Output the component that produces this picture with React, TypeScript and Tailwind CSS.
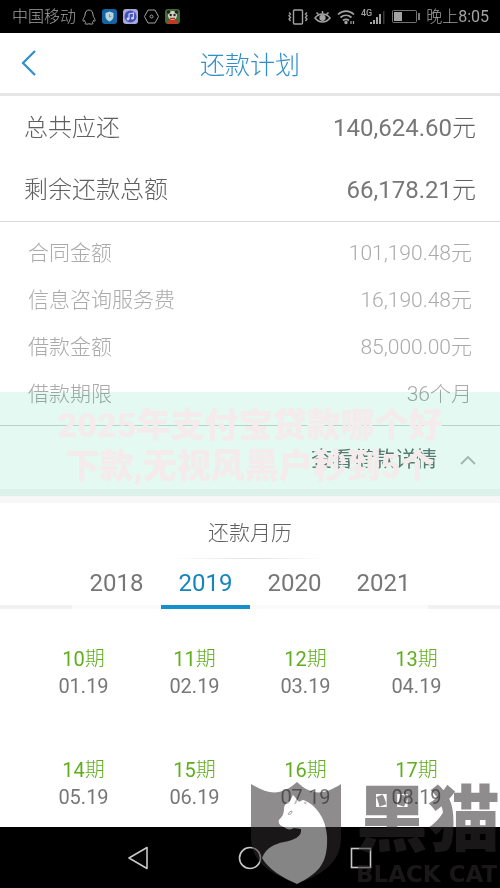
const summary = [
  { label: '总共应还', value: '140,624.60' },
  { label: '剩余还款总额', value: '66,178.21' },
];

const details = [
  { label: '合同金额', value: '101,190.48元' },
  { label: '信息咨询服务费', value: '16,190.48元' },
  { label: '借款金额', value: '85,000.00元' },
  { label: '借款期限', value: '36个月' },
];

const years = ['2018', '2019', '2020', '2021'];
const currentYear = '2019';

const periods = [
  { number: 10, date: '01.19' },
  { number: 11, date: '02.19' },
  { number: 12, date: '03.19' },
  { number: 13, date: '04.19' },
  { number: 14, date: '05.19' },
  { number: 15, date: '06.19' },
  { number: 16, date: '07.19' },
  { number: 17, date: '08.19' },
];

const catPath =
  'M43 15 L49 22 L53 20 C68 25 79 44 77 65 C76 84 68 94 47 104 C33 98 18 89 12 78 C16 68 24 64 34 62 C44 60 52 57 51 49 L44 48 C41 50 37 50 34 47 C30 46 28 43 29 40 C32 37 34 34 34 30 C34 25 36 23 40 21 Z';

function StatusBar() {
  return (
    <div className="flex h-[33px] items-center justify-between bg-black pr-[11px] pl-3 text-[#a3a3a3]">
      <div className="flex items-center gap-[6px]">
        <span className="pt-px text-base leading-5 font-light">中国移动</span>
        <svg className="h-[16px] w-[14px]" viewBox="0 0 14 16" fill="none" stroke="currentColor" strokeWidth="1">
          <path d="M3 6C3 3 4.500 1 7 1s4 2 4 5c0 1 .4 1.600 1 2.500 1 1.500 1.300 3 .8 3.700-.4.300-.9-.2-1.300-.9-.2 1-.6 1.700-1.200 2.200.7.300 1 .7.700 1.100-.6.700-3 .7-4 .1-1 .6-3.400.6-4-.1-.3-.4 0-.8.7-1.100-.6-.5-1-1.200-1.200-2.200-.4.700-.9 1.200-1.300.9C.7 11.500 1 10 2 8.500 2.600 7.600 3 7 3 6Z" />
        </svg>
        <svg className="h-[15px] w-[15px]" viewBox="0 0 15 15">
          <rect width="15" height="15" rx="3" fill="#1764a4" />
          <path d="M7.500 2.500 11.500 4v3.500c0 2.500-2 4-4 5-2-1-4-2.500-4-5V4Z" fill="#b8d4dc" />
          <path d="M7.500 5v3l2-1" stroke="#6f9fae" fill="none" />
        </svg>
        <svg className="h-[15px] w-[15px]" viewBox="0 0 15 15">
          <rect width="15" height="15" rx="3" fill="#a9aadb" />
          <circle cx="7.500" cy="7.500" r="6" fill="#4650b8" />
          <path d="M6 10V5l4.500-1v5" stroke="#c6d4ff" strokeWidth="1.200" fill="none" />
          <circle cx="5" cy="10" r="1.400" fill="#c6d4ff" />
          <circle cx="9.500" cy="9.200" r="1.400" fill="#c6d4ff" />
        </svg>
        <svg className="h-[15px] w-[15px]" viewBox="0 0 15 15" fill="none" stroke="currentColor">
          <path d="M4 1h7l3.500 6.500L11 14H4L.5 7.500Z" />
          <circle cx="7.500" cy="7.500" r="1.500" />
        </svg>
        <svg className="h-[15px] w-[15px]" viewBox="0 0 15 15">
          <rect width="15" height="15" rx="3" fill="#3f6d3a" />
          <path d="M2 15c0-3 2-4.500 5.500-4.500S13 12 13 15Z" fill="#c23a25" />
          <circle cx="7.500" cy="6.500" r="4.500" fill="#d8d2c4" />
          <circle cx="3.500" cy="3" r="1.800" fill="#222" />
          <circle cx="11.500" cy="3" r="1.800" fill="#222" />
          <circle cx="5.700" cy="6" r="1.200" fill="#222" />
          <circle cx="9.500" cy="6" r="1.200" fill="#222" />
          <path d="M5 9.500h5" stroke="#b0301e" strokeWidth="1.500" />
        </svg>
      </div>
      <div className="flex items-center gap-[6px]">
        <svg className="h-4 w-5" viewBox="0 0 20 16" fill="none" stroke="currentColor" strokeWidth="1.400">
          <rect x="5.500" y="1" width="9" height="14" rx="1" />
          <path d="M1 3.500 2.500 5 1 6.700 2.500 8.400 1 10l1.500 2M19 3.500 17.500 5 19 6.700l-1.500 1.700L19 10l-1.500 2" strokeWidth="1.300" />
        </svg>
        <svg className="h-4 w-[17px]" viewBox="0 0 17 16" fill="none" stroke="currentColor" strokeWidth="1.500">
          <path d="M1 9c4-5.300 11-5.300 15 0-4 5.300-11 5.300-15 0Z" />
          <circle cx="8.500" cy="8.800" r="2.400" fill="currentColor" />
          <path d="M8.500 5V2M4.500 5.500 2.500 3.500M12.500 5.500l2-2" />
        </svg>
        <svg className="h-4 w-[18px]" viewBox="0 0 18 16" fill="none" stroke="currentColor" strokeWidth="1.700">
          <path d="M1 5.500c4.700-4.600 11.300-4.600 16 0M3.500 8.500c3.300-3 7.700-3 11 0M6 11.500c2-1.500 4-1.500 6 0" />
          <circle cx="9" cy="13.600" r=".9" fill="currentColor" />
          <path d="M14 12v3M16.500 12v3" strokeWidth="1.200" />
        </svg>
        <svg className="h-4 w-[25px]" viewBox="0 0 25 16" fill="currentColor">
          <text x="0" y="7" fontSize="9" fontWeight="500" fontFamily="Roboto, sans-serif">4G</text>
          <path d="M9 13h2v2H9zM12 11h2v4h-2zM15 8h2v7h-2zM18 5h2v10h-2z" />
          <path d="M22 2h1.500v13H22z" opacity=".35" />
        </svg>
        <svg className="h-[13px] w-[28px]" viewBox="0 0 28 13" fill="none" stroke="currentColor">
          <rect x=".5" y=".5" width="24" height="12" rx="1" opacity=".7" />
          <path d="M2 2h8v9H2Z" fill="currentColor" stroke="none" />
          <path d="M27 3v7" strokeWidth="1.500" />
        </svg>
        <span className="pt-px text-base leading-5">
          <span className="font-light">晚上</span>8:05
        </span>
      </div>
    </div>
  );
}

function Promo() {
  return (
    <div className="pointer-events-none absolute inset-x-0 top-[392px] h-[104px]">
      <div className="absolute inset-0 bg-[#e3f9f2] mix-blend-multiply" />
      <p className="relative pt-[13px] text-center text-[34px] leading-[41px] font-black text-[#f5eaec]">
        2025年支付宝贷款哪个好
        <br />
        下款,无视风黑户秒到5个
      </p>
    </div>
  );
}

function BlackCat() {
  return (
    <div className="pointer-events-none absolute right-0 bottom-0 flex h-[108px] w-[250px]">
      <svg className="h-[108px] w-[92px] shrink-0" viewBox="0 0 92 108">
        <path
          d={'M1 4c18 11 30 12 46-2 15 14 27 13 44 2v54c0 24-18 36-44 46C21 94 1 82 1 58Z' + catPath}
          fill="#302a2c"
          fillOpacity=".54"
          fillRule="evenodd"
        />
        <path d={catPath} fill="#ffffff" fillOpacity=".52" />
        <path d="M38 34c1-2 3-3 4-3 0 2-1 4-4 3Z" fill="none" stroke="#8f8b8d" strokeWidth=".8" />
      </svg>
      <div className="pl-[14px] text-[#302a2c]/54">
        <p className="h-[82px] text-[72px] leading-[82px] font-black whitespace-nowrap">黑猫</p>
        <p className="font-['DejaVu_Sans',sans-serif] text-[23px] leading-6 font-bold whitespace-nowrap">BLACK CAT</p>
      </div>
    </div>
  );
}

function NavBar() {
  return (
    <nav className="flex h-[61px] items-center justify-center gap-[87px] bg-black text-[#c8c8c8]">
      <button aria-label="后退">
        <svg className="h-6 w-6" viewBox="0 0 24 24" fill="none" stroke="currentColor" strokeWidth="1.600" strokeLinejoin="round">
          <path d="M2 12 20 1.500v21Z" />
        </svg>
      </button>
      <button aria-label="主页">
        <svg className="h-6 w-6" viewBox="0 0 24 24" fill="none" stroke="currentColor" strokeWidth="1.600">
          <circle cx="12" cy="12" r="10.500" />
        </svg>
      </button>
      <button aria-label="最近任务">
        <svg className="h-6 w-6" viewBox="0 0 24 24" fill="none" stroke="currentColor" strokeWidth="1.600">
          <rect x="2.500" y="2.500" width="19" height="19" />
        </svg>
      </button>
    </nav>
  );
}

export default function App() {
  return (
    <main className="relative overflow-hidden bg-white font-[Roboto,'Noto_Sans_CJK_SC',sans-serif] text-[#777777]">
      <StatusBar />
      <header className="grid h-[63px] grid-cols-[1fr_auto_1fr] items-center border-b-[3px] border-[#e6e6e6] px-5 text-[#2f8fcd]">
        <button aria-label="返回" className="justify-self-start">
          <svg className="h-[26px] w-4" viewBox="0 0 16 26" fill="none" stroke="currentColor" strokeWidth="2.200">
            <path d="M15 1 3 13l12 12" />
          </svg>
        </button>
        <h1 className="pt-1.5 text-[25px] leading-8 font-light">还款计划</h1>
      </header>

      <dl className="border-b border-[#d8dbde] pt-px">
        {summary.map((item) => (
          <div key={item.label} className="flex h-[62px] items-center justify-between px-6 text-2xl">
            <dt className="font-light text-[#606060]">{item.label}</dt>
            <dd>
              {item.value}
              <span className="font-light text-[#606060]">元</span>
            </dd>
          </div>
        ))}
      </dl>
      <dl className="border-b border-[#cfd6d4] pt-2 pb-[7px] font-light text-[#aaaaaa]">
        {details.map((item) => (
          <div key={item.label} className="flex h-[47px] items-center justify-between px-7 text-[21px]">
            <dt>{item.label}</dt>
            <dd>{item.value}</dd>
          </div>
        ))}
      </dl>
      <button className="flex h-[63px] w-full items-center justify-end gap-[23px] pt-1 pr-6 text-[21px] text-[#647d76]">
        查看借款详情
        <svg className="h-[10px] w-4" viewBox="0 0 16 10" fill="none" stroke="#b3bdb9" strokeWidth="1.800">
          <path d="m1 9 7-7 7 7" />
        </svg>
      </button>
      <div className="h-[14px] bg-[#f7f7f7]" />

      <section>
        <h2 className="pt-[14px] pb-[9px] text-center text-[21px] leading-8 font-light text-[#606060]">还款月历</h2>
        <div className="mx-auto h-px w-[156px] bg-linear-to-r from-white via-[#e2e2e2] to-white" />
        <div className="flex h-[50px] text-2xl">
          <div className="flex-1 border-b-4 border-[#f1f1f1]" />
          {years.map((year) => (
            <button
              key={year}
              className={
                year === currentYear
                  ? 'w-[89px] border-b-4 border-[#1490cc] pt-[2px] text-[#1585bd]'
                  : 'w-[89px] border-b-4 border-[#fafafa] pt-[2px]'
              }
            >
              {year}
            </button>
          ))}
          <div className="flex-1 border-b-4 border-[#f1f1f1]" />
        </div>
        <ul className="grid grid-cols-4 px-7 pt-9 text-center text-xl leading-7">
          {periods.map((period) => (
            <li key={period.number} className="h-[111px] nth-[n+5]:h-[71px]">
              <p className="text-[#5fae1c]">
                {period.number}
                <span className="font-light">期</span>
              </p>
              <p className="leading-[26px]">{period.date}</p>
            </li>
          ))}
        </ul>
      </section>

      <NavBar />
      <BlackCat />
      <Promo />
    </main>
  );
}
